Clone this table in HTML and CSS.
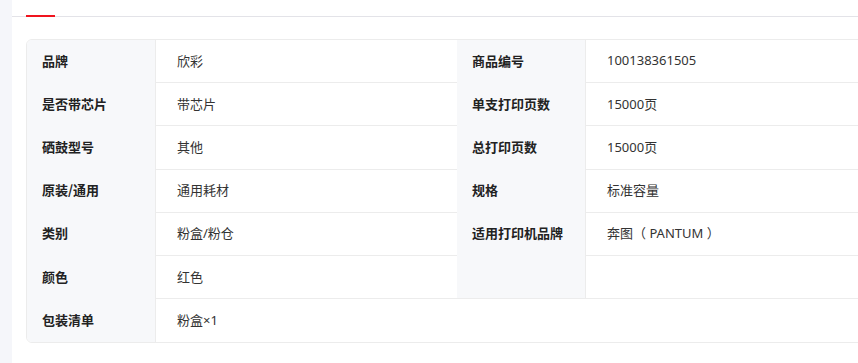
FILE: index.html
```html
<!DOCTYPE html>
<html lang="zh">
<head>
<meta charset="utf-8">
<link rel="stylesheet" href="styles.css">
</head>
<body>
<div class="page">
  <aside class="side"></aside>
  <main class="main">
    <div class="tabs"><span class="tab active"></span></div>
    <div class="specs">
      <div class="lbl">品牌</div><div class="val">欣彩</div>
      <div class="lbl">商品编号</div><div class="val">100138361505</div>

      <div class="lbl">是否带芯片</div><div class="val">带芯片</div>
      <div class="lbl">单支打印页数</div><div class="val">15000页</div>

      <div class="lbl">硒鼓型号</div><div class="val">其他</div>
      <div class="lbl">总打印页数</div><div class="val">15000页</div>

      <div class="lbl">原装/通用</div><div class="val">通用耗材</div>
      <div class="lbl">规格</div><div class="val">标准容量</div>

      <div class="lbl">类别</div><div class="val">粉盒/粉仓</div>
      <div class="lbl">适用打印机品牌</div><div class="val">奔图（ PANTUM ）</div>

      <div class="lbl">颜色</div><div class="val">红色</div>
      <div class="lbl lined"></div><div class="val"></div>

      <div class="lbl">包装清单</div><div class="val wide last">粉盒×1</div>
    </div>
  </main>
</div>
</body>
</html>
```

FILE: styles.css
```css
html, body {
  margin: 0;
  padding: 0;
  overflow: hidden;
  background: #ffffff;
}

body {
  font-family: "Noto Sans CJK SC", "Noto Sans", sans-serif;
  font-size: 13px;
  color: #333333;
}

.page {
  display: flex;
  width: 858px;
  height: 363px;
}

.side {
  width: 12px;
  flex: none;
  background: #f5f6fa;
}

.main {
  flex: 1;
  padding-left: 14px;
  overflow: hidden;
}

.tabs {
  height: 16px;
  border-bottom: 1px solid #e3e3e8;
  margin-left: -14px;
  padding-left: 14px;
  display: flex;
  align-items: flex-end;
}

.tab.active {
  display: block;
  width: 29px;
  height: 2px;
  background: #f0141e;
  margin-bottom: -1px;
}

.specs {
  margin-top: 22px;
  width: 900px;
  border: 1px solid #ececec;
  border-radius: 6px;
  overflow: hidden;
  display: grid;
  grid-template-columns: 129px 301px 129px 1fr;
  grid-auto-rows: 43.2px;
}

.lbl {
  box-sizing: border-box;
  background: #f7f8fa;
  border-right: 1px solid #ececec;
  padding-left: 15px;
  padding-bottom: 3px;
  display: flex;
  align-items: center;
  font-weight: bold;
  color: #222222;
}

.lbl.lined {
  border-bottom: 1px solid #ececec;
}

.val {
  box-sizing: border-box;
  border-bottom: 1px solid #ececec;
  padding-left: 21px;
  padding-bottom: 2px;
  display: flex;
  align-items: center;
  color: #333333;
  font-family: "Noto Sans", "Noto Sans CJK SC", sans-serif;
}

.val.wide {
  grid-column: span 3;
}

.val.last {
  border-bottom: none;
}
```
